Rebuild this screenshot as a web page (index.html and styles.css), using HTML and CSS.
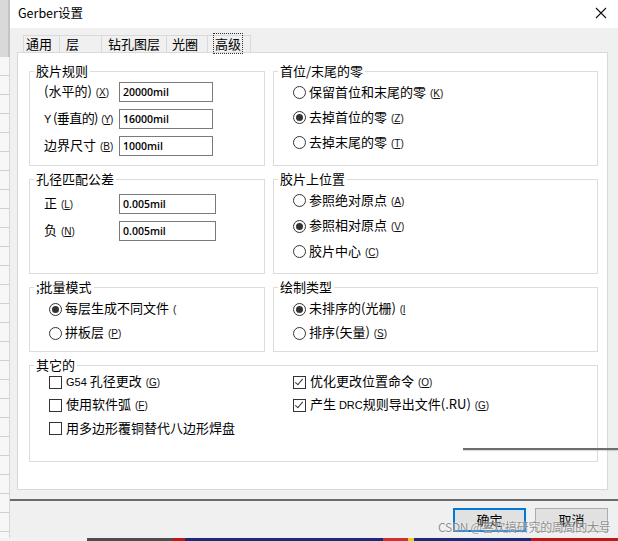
FILE: index.html
```html
<!DOCTYPE html>
<html lang="zh-CN">
<head>
    <meta charset="UTF-8">
    <meta name="viewport" content="width=device-width, initial-scale=1.0">
    <title>Gerber设置</title>
    <link rel="stylesheet" href="styles.css">
</head>
<body>

    <div class="screen">
        <div class="backdrop">
            <div class="backdrop-top"></div>
            <div class="backdrop-sheet"></div>
        </div>

        <div class="dialog">
            <div class="titlebar">
                <span class="title">Gerber设置</span>
                <svg class="close" width="12" height="12" viewBox="0 0 12 12">
                    <path d="M1 1 L11 11 M11 1 L1 11" stroke="#111" stroke-width="1.1" fill="none"/>
                </svg>
            </div>

            <div class="dialog-body">
                <div class="tabs">
                    <div class="tab tab-general">通用</div>
                    <div class="tab tab-layers">层</div>
                    <div class="tab tab-drill">钻孔图层</div>
                    <div class="tab tab-aperture">光圈</div>
                    <div class="tab tab-advanced"><span class="focus">高级</span></div>
                </div>

                <div class="panel">
                    <div class="groups">
                        <fieldset class="group film-rules">
                            <legend>胶片规则</legend>
                            <div class="field">
                                <label>(水平的) <span class="key">(<u>X</u>)</span></label>
                                <input type="text" value="20000mil">
                            </div>
                            <div class="field">
                                <label class="tight"><span class="small">Y</span> (垂直的) <span class="key">(<u>Y</u>)</span></label>
                                <input type="text" value="16000mil">
                            </div>
                            <div class="field">
                                <label>边界尺寸 <span class="key">(<u>B</u>)</span></label>
                                <input type="text" value="1000mil">
                            </div>
                        </fieldset>

                        <fieldset class="group zeros">
                            <legend>首位/末尾的零</legend>
                            <div class="option"><span class="radio"></span><span>保留首位和末尾的零 <span class="key">(<u>K</u>)</span></span></div>
                            <div class="option"><span class="radio on"></span><span>去掉首位的零 <span class="key">(<u>Z</u>)</span></span></div>
                            <div class="option"><span class="radio"></span><span>去掉末尾的零 <span class="key">(<u>T</u>)</span></span></div>
                        </fieldset>

                        <fieldset class="group tolerance">
                            <legend>孔径匹配公差</legend>
                            <div class="field">
                                <label>正 <span class="key">(<u>L</u>)</span></label>
                                <input type="text" class="wide" value="0.005mil">
                            </div>
                            <div class="field">
                                <label>负 <span class="key">(<u>N</u>)</span></label>
                                <input type="text" class="wide" value="0.005mil">
                            </div>
                        </fieldset>

                        <fieldset class="group position">
                            <legend>胶片上位置</legend>
                            <div class="option tall"><span class="radio"></span><span>参照绝对原点 <span class="key">(<u>A</u>)</span></span></div>
                            <div class="option tall"><span class="radio on"></span><span>参照相对原点 <span class="key">(<u>V</u>)</span></span></div>
                            <div class="option tall"><span class="radio"></span><span>胶片中心 <span class="key">(<u>C</u>)</span></span></div>
                        </fieldset>

                        <fieldset class="group batch">
                            <legend>;批量模式</legend>
                            <div class="option short"><span class="radio on"></span><span>每层生成不同文件 <span class="key">(</span></span></div>
                            <div class="option short"><span class="radio"></span><span>拼板层 <span class="key">(<u>P</u>)</span></span></div>
                        </fieldset>

                        <fieldset class="group plot">
                            <legend>绘制类型</legend>
                            <div class="option short"><span class="radio on"></span><span>未排序的(光栅) <span class="key">(<u>l</u></span></span></div>
                            <div class="option short"><span class="radio"></span><span>排序(矢量) <span class="key">(<u>S</u>)</span></span></div>
                        </fieldset>

                        <fieldset class="group other">
                            <legend>其它的</legend>
                            <div class="other-cols">
                                <div class="col">
                                    <div class="check-row"><span class="check"></span><span><span class="small">G54</span> 孔径更改 <span class="key">(<u>G</u>)</span></span></div>
                                    <div class="check-row"><span class="check"></span><span>使用软件弧 <span class="key">(<u>F</u>)</span></span></div>
                                    <div class="check-row"><span class="check"></span><span>用多边形覆铜替代八边形焊盘</span></div>
                                </div>
                                <div class="col">
                                    <div class="check-row"><span class="check on"></span><span>优化更改位置命令 <span class="key">(<u>O</u>)</span></span></div>
                                    <div class="check-row"><span class="check on"></span><span>产生 <span class="small">DRC</span>规则导出文件(.RU) <span class="key">(<u>G</u>)</span></span></div>
                                </div>
                            </div>
                        </fieldset>
                    </div>
                </div>

                <div class="footer">
                    <button class="btn default">确定</button>
                    <button class="btn">取消</button>
                </div>
            </div>
        </div>
    </div>

    <div class="taskbar"></div>

    <div class="stray-edge"></div>
    <div class="watermark">CSDN @喜欢搞研究的周周的大号</div>

</body>
</html>
```

FILE: styles.css
```css
body {
    margin: 0;
    width: 618px;
    height: 541px;
    overflow: hidden;
    position: relative;
    display: flex;
    flex-direction: column;
    font-family: "Noto Sans CJK SC", "Noto Sans", sans-serif;
    font-size: 13px;
    color: #000;
    background-color: #f0f0f0;
}
.screen {
    display: flex;
    height: 538px;
}

/* window behind the dialog */
.backdrop {
    width: 10px;
    display: flex;
    flex-direction: column;
}
.backdrop-top {
    height: 57px;
    background-color: #d9d9d9;
    border-right: 2px solid #c4c4c4;
}
.backdrop-sheet {
    flex: 1;
    background: repeating-linear-gradient(#f7f7f7 0 18px, #d0d0d0 18px 19px);
    border-right: 1px solid #d6d6d6;
}

.dialog {
    flex: 1;
    display: flex;
    flex-direction: column;
}
.titlebar {
    height: 28px;
    background-color: #fff;
    display: flex;
    align-items: center;
    justify-content: space-between;
    padding: 0 11px 3px 8px;
    box-sizing: border-box;
}
.title {
    font-size: 12.5px;
    line-height: 16px;
}
.dialog-body {
    flex: 1;
    display: flex;
    flex-direction: column;
    background-color: #f0f0f0;
    padding: 7px 10px 0 7px;
}

/* tabs */
.tabs {
    display: flex;
    height: 17px;
    padding-left: 6px;
    position: relative;
    z-index: 1;
}
.tab {
    box-sizing: border-box;
    line-height: 15px;
    border: 1px solid #d9d9d9;
    border-left: none;
    border-bottom: none;
    background-color: #f0f0f0;
    white-space: nowrap;
}
.tab-general {
    width: 37px;
    padding-left: 2px;
    border-left: 1px solid #d9d9d9;
}
.tab-layers {
    width: 42px;
    padding-left: 6px;
}
.tab-drill {
    width: 65px;
    padding-left: 6px;
}
.tab-aperture {
    width: 41px;
    padding-left: 5px;
}
.tab-advanced {
    width: 43px;
    padding-left: 6px;
}
.focus {
    outline: 1px dotted #333;
    padding: 0 1px;
}

.panel {
    height: 438px;
    box-sizing: border-box;
    background-color: #fff;
    border: 1px solid #d9d9d9;
    padding: 9px 9px 0 11px;
}
.groups {
    display: grid;
    grid-template-columns: 236px 1fr;
    grid-template-rows: 104px 104px 74px 106px;
    column-gap: 8px;
    row-gap: 4px;
}
.group {
    margin: 0;
    min-width: 0;
    border: 1px solid #dcdcdc;
    padding: 0 0 0 19px;
}
.group legend {
    line-height: 18px;
    padding: 0 2px;
    margin-left: -15px;
}
.other {
    grid-column: 1 / span 2;
}

/* label + input rows */
.film-rules,
.tolerance {
    padding-left: 14px;
}
.film-rules legend,
.tolerance legend {
    margin-left: -10px;
}
.film-rules {
    padding-top: 2px;
}
.tolerance {
    padding-top: 6px;
}
.field {
    display: flex;
    align-items: center;
    height: 20px;
    margin-bottom: 7px;
}
.field label {
    width: 75px;
    flex-shrink: 0;
    line-height: 18px;
    white-space: nowrap;
}
.field label.tight {
    letter-spacing: -0.6px;
}
.field input {
    width: 94px;
    height: 20px;
    box-sizing: border-box;
    border: 1px solid #7a7a7a;
    padding: 0 3px;
    font-family: "Open Sans", sans-serif;
    font-weight: 600;
    font-size: 10.5px;
    color: #000;
    background-color: #fff;
}
.field input.wide {
    width: 97px;
}

/* radio options */
.option {
    display: flex;
    align-items: center;
    height: 25px;
    line-height: 18px;
    white-space: nowrap;
}
.option.tall {
    height: 25.5px;
}
.option.short {
    height: 24px;
}
.batch,
.plot {
    padding-top: 1px;
}
.radio {
    width: 13px;
    height: 13px;
    flex-shrink: 0;
    box-sizing: border-box;
    border: 1px solid #333;
    border-radius: 50%;
    background-color: #fff;
    margin-right: 3px;
    display: flex;
    align-items: center;
    justify-content: center;
}
.radio.on::after {
    content: "";
    width: 7px;
    height: 7px;
    border-radius: 50%;
    background-color: #333;
}

/* checkboxes */
.other-cols {
    display: grid;
    grid-template-columns: 244px 1fr;
    margin-top: -1px;
}
.check-row {
    display: flex;
    align-items: center;
    height: 18px;
    margin-bottom: 5px;
    line-height: 18px;
    white-space: nowrap;
}
.check {
    width: 13px;
    height: 13px;
    flex-shrink: 0;
    box-sizing: border-box;
    border: 1px solid #333;
    background-color: #fff;
    margin-right: 4px;
    position: relative;
}
.check.on::after {
    content: "";
    position: absolute;
    left: 3px;
    top: 0px;
    width: 3px;
    height: 7px;
    border-right: 1px solid #333;
    border-bottom: 1px solid #333;
    transform: rotate(40deg);
}

.key {
    font-family: "Liberation Sans", sans-serif;
    font-size: 10px;
    margin-left: 1px;
    color: #111;
}
.small {
    font-family: "Liberation Sans", sans-serif;
    font-size: 11px;
}

/* buttons */
.footer {
    flex: 1;
    margin: 9px -10px 0 -7px;
    border-top: 2px solid #6a6a6a;
    display: flex;
    justify-content: flex-end;
    align-items: flex-start;
    gap: 9px;
    padding: 7px 10px 0 0;
}
.btn {
    width: 73px;
    height: 24px;
    background-color: #e1e1e1;
    border: 1px solid #adadad;
    font-family: "Noto Sans CJK SC", sans-serif;
    font-size: 13px;
    line-height: 18px;
    padding: 0;
    color: #000;
}
.btn.default {
    border: 2px solid #0078d7;
}

.taskbar {
    height: 3px;
    background: linear-gradient(90deg, #f2f2f2 0 14%, #4d4d4d 14% 28%, #c01818 28% 30%, #1c2a7a 30% 62%, #d03030 62% 66%, #e8d020 66% 67%, #1c2a7a 67% 86%, #c01818 86% 100%);
}

/* overlays */
.stray-edge {
    position: absolute;
    left: 463px;
    top: 448px;
    width: 155px;
    height: 2px;
    background-color: #6e6e6e;
    box-shadow: 0 1px 1px rgba(0, 0, 0, 0.15);
}
.watermark {
    position: absolute;
    left: 438px;
    top: 519px;
    font-size: 12px;
    line-height: 16px;
    letter-spacing: -0.3px;
    color: rgba(110, 110, 110, 0.75);
    text-shadow: 0 0 2px #fff;
    white-space: nowrap;
}
```
